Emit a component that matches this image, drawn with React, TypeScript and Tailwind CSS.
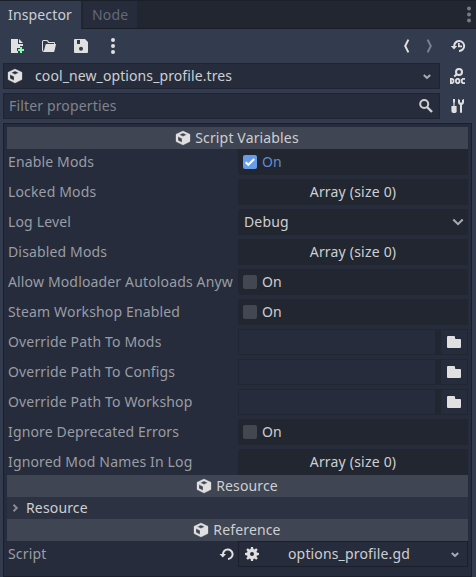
import type { ReactNode } from 'react';

type IconProps = { children: ReactNode; className?: string };

function Icon({ children, className = '' }: IconProps) {
  return (
    <svg width="16" height="16" viewBox="0 0 16 16" fill="#e0e0e0" className={`block shrink-0 ${className}`}>
      {children}
    </svg>
  );
}

function CubeIcon() {
  return (
    <Icon>
      <path
        fillRule="evenodd"
        d="M8 1 15 4.3V11.6L8 15 1 11.6V4.3ZM8 3 4.4 4.7 8 6.4 11.6 4.7ZM3 6.5V10.4L7 12.4V8.5Z"
        stroke="#e0e0e0"
        strokeWidth=".3"
        strokeLinejoin="round"
      />
    </Icon>
  );
}

function SmallArrow() {
  return (
    <Icon>
      <path d="M4.8 7 8 10 11.2 7" fill="none" stroke="#a9acb3" strokeWidth="2" />
    </Icon>
  );
}

function FolderIcon() {
  return (
    <Icon>
      <path d="M2 2a1 1 0 0 0-1 1v10a1 1 0 0 0 1 1h12a1 1 0 0 0 1-1V6a1 1 0 0 0-1-1h-4a1 1 0 0 1-1-1V3a1 1 0 0 0-1-1Z" />
    </Icon>
  );
}

function Row({ label, children }: { label: string; children: ReactNode }) {
  return (
    <div className="mb-1 flex h-[26px] last:mb-0">
      <div className="w-[231px] shrink-0 overflow-hidden pl-px pr-[5px] leading-[25px] text-[#9a9da5]">
        <div className="overflow-hidden whitespace-nowrap">{label}</div>
      </div>
      {children}
    </div>
  );
}

function Toggle({ on = false }: { on?: boolean }) {
  return (
    <div className="flex flex-1 items-center bg-[#222630] pl-[5px]">
      <div className={`h-[14px] w-[14px] rounded-[2px] ${on ? 'bg-[#699ce8]' : 'bg-[#43474f]'}`}>
        {on && (
          <svg width="14" height="14" viewBox="0 0 14 14" className="block">
            <path d="M2.7 7.2 5.3 9.8 11.2 4" fill="none" stroke="#fff" strokeWidth="2" />
          </svg>
        )}
      </div>
      <span className={`ml-[5px] leading-[24px] ${on ? 'text-[#5f8cd0]' : ''}`}>On</span>
    </div>
  );
}

function ArrayValue() {
  return <div className="flex-1 bg-[#222630] text-center leading-[25px] tracking-[0.2px]">Array (size 0)</div>;
}

function PathValue() {
  return (
    <div className="flex flex-1 bg-[#222630] p-px">
      <div className="w-[196px] bg-[#262c3b]" />
      <div className="ml-[6px] flex flex-1 items-center justify-center bg-[#262c3b]">
        <FolderIcon />
      </div>
    </div>
  );
}

function Category({ title }: { title: string }) {
  return (
    <div className="flex h-[22px] items-center justify-center gap-1 bg-[#404553] pr-px leading-[22px]">
      <CubeIcon />
      {title}
    </div>
  );
}

export default function App() {
  return (
    <div className="flex h-[577px] w-[476px] flex-col overflow-hidden bg-[#333b4f] font-['Noto_Sans',sans-serif] text-[14px] tracking-[0.15px] text-[#cdcfd2]">
      <div className="flex h-[29px] border-t border-[#1b1f29] bg-[#222630] leading-[27px]">
        <div className="w-[81px] bg-[#333b4f] pl-2">Inspector</div>
        <div className="flex flex-1 border-b border-[#191d26] pl-[2px]">
          <div className="w-[54px] bg-[#262c3b] pl-[9px] text-[#656974]">Node</div>
          <div className="flex flex-1 items-center justify-end">
            <svg width="16" height="18" viewBox="0 0 16 18" fill="#777b84" className="block">
              <circle cx="9" cy="2.5" r="2" />
              <circle cx="9" cy="8.5" r="2" />
              <circle cx="9" cy="14.5" r="2" />
            </svg>
          </div>
        </div>
      </div>

      <div className="flex h-[34px] items-center pl-[9px] pr-[10px]">
        <Icon>
          <path d="M2 1v14h7v-2H8v-3h3V8h3V6H9V1Zm8 0v4h4Z" />
          <path d="M11 9h2v2h2v2h-2v2h-2v-2H9v-2h2Z" fill="#84ffb1" />
        </Icon>
        <Icon className="ml-4">
          <path
            fillRule="evenodd"
            d="M2.5 2A1.5 1.5 0 0 0 1 3.5V12a2 2 0 0 0 2 2h9.5a1 1 0 0 0 .9-.7L15 6.6A.5.5 0 0 0 14.5 6H14V5a1 1 0 0 0-1-1H8L7 2.6A1.3 1.3 0 0 0 6 2ZM2.6 3H5.7L7.3 5H13V6H5.5a1 1 0 0 0-1 .7L3 12.4a.5.5 0 0 1-1-.2V3.6a.6.6 0 0 1 .6-.6Z"
          />
        </Icon>
        <Icon className="ml-4">
          <path
            fillRule="evenodd"
            d="M2 1a1 1 0 0 0-1 1v12a1 1 0 0 0 1 1h12a1 1 0 0 0 1-1V4l-3-3ZM4 2h5v4H4Zm4 6.8a2 2 0 1 1 0 4 2 2 0 0 1 0-4Z"
          />
          <path d="M7 2h2v4H7Z" />
        </Icon>
        <Icon className="ml-4">
          <circle cx="8" cy="2" r="2" />
          <circle cx="8" cy="8" r="2" />
          <circle cx="8" cy="14" r="2" />
        </Icon>
        <div className="flex-1" />
        <Icon className="mr-2">
          <path d="M11.4 1.6 8.2 8 11.4 14.4" fill="none" stroke="#e0e0e0" strokeWidth="2" />
        </Icon>
        <Icon className="mr-[13px]">
          <path d="M6.6 1.6 9.8 8 6.6 14.4" fill="none" stroke="#7d818b" strokeWidth="2" />
        </Icon>
        <Icon>
          <path d="M4.2 8.5A5 5 0 1 1 9 13" fill="none" stroke="#e0e0e0" strokeWidth="2" />
          <path d="M.8 8h6.4L4 11.5ZM8 5h1.7v2.6H12v1.6H8Z" />
        </Icon>
      </div>

      <div className="flex h-[26px] pl-[3px] pr-[10px]">
        <div className="flex w-[437px] items-center border border-[#202430] bg-[#262c3b] pl-[3px] pr-[4px]">
          <CubeIcon />
          <span className="ml-3 flex-1 leading-[24px] tracking-[0.1px]">cool_new_options_profile.tres</span>
          <SmallArrow />
        </div>
        <div className="ml-[9px] flex items-center">
          <Icon>
            <circle cx="10" cy="4" r="3" fill="none" stroke="#e0e0e0" strokeWidth="2" />
            <path d="M7.8 6.2 5.2 8.6" stroke="#e0e0e0" strokeWidth="2" />
            <path
              d="M1.9 10.9v4.2h1a1.6 1.6 0 0 0 1.6-1.6v-1a1.6 1.6 0 0 0-1.6-1.6ZM8 10.9h1.4l1 1v2.2l-1 1H8l-1-1v-2.2ZM16 10.9h-2.2l-1 1v2.2l1 1H16"
              fill="none"
              stroke="#e0e0e0"
              strokeWidth="1.8"
            />
          </Icon>
        </div>
      </div>

      <div className="mt-1 flex h-[26px] pl-[3px] pr-[10px]">
        <div className="flex w-[437px] items-center border border-[#202430] bg-[#262c3b] pl-[5px] pr-[5px]">
          <span className="flex-1 leading-[24px] text-[#80848d]">Filter properties</span>
          <Icon>
            <circle cx="6.2" cy="6" r="4" fill="none" stroke="#cdcfd2" strokeWidth="2" />
            <path d="M9 9 14 14" stroke="#cdcfd2" strokeWidth="2.4" />
          </Icon>
        </div>
        <div className="ml-[9px] flex items-center">
          <Icon>
            <path d="M4 1h2v3l-.4 1v3H7.6v4.2A2 2 0 0 1 6 15H4a2 2 0 0 1-1.6-2.2V8h2V5L4 4Z" />
            <path d="M9 1v3.2A3 3 0 0 0 11 7v7a1 1 0 0 0 2 0V7a3 3 0 0 0 2-2.8V1l-2 1v2.5h-2V2Z" />
          </Icon>
        </div>
      </div>

      <div className="ml-[3px] mt-1 h-[454px] w-[469px] border border-[#1b1f29] bg-[#262c3b] px-[3px] pt-[3px]">
        <Category title="Script Variables" />
        <div>
          <Row label="Enable Mods"><Toggle on /></Row>
          <Row label="Locked Mods"><ArrayValue /></Row>
          <Row label="Log Level">
            <div className="flex flex-1 items-center bg-[#222630] pl-[6px] pr-[2px]">
              <span className="flex-1 leading-[24px]">Debug</span>
              <Icon>
                <path d="M3.3 5.5 8 10.2 12.7 5.5" fill="none" stroke="#a9acb3" strokeWidth="2" />
              </Icon>
            </div>
          </Row>
          <Row label="Disabled Mods"><ArrayValue /></Row>
          <Row label="Allow Modloader Autoloads Anyw"><Toggle /></Row>
          <Row label="Steam Workshop Enabled"><Toggle /></Row>
          <Row label="Override Path To Mods"><PathValue /></Row>
          <Row label="Override Path To Configs"><PathValue /></Row>
          <Row label="Override Path To Workshop"><PathValue /></Row>
          <Row label="Ignore Deprecated Errors"><Toggle /></Row>
          <Row label="Ignored Mod Names In Log"><ArrayValue /></Row>
        </div>
        <Category title="Resource" />
        <div className="flex h-[22px] items-center bg-[#2c3241] leading-[22px]">
          <Icon>
            <path d="M6.5 4.7 9.8 8 6.5 11.3" fill="none" stroke="#888c95" strokeWidth="2" />
          </Icon>
          <span className="ml-[3px]">Resource</span>
        </div>
        <Category title="Reference" />
        <div className="flex h-[26px] items-center">
          <span className="w-[212px] pl-px leading-[24px] text-[#9a9da5]">Script</span>
          <Icon>
            <path d="M4 8.5A4.8 4.8 0 1 1 9 13" fill="none" stroke="#e0e0e0" strokeWidth="2" />
            <path d="M.5 8h6.6L3.8 11.6Z" />
          </Icon>
          <div className="ml-[3px] flex h-[26px] flex-1 items-center border border-[#1b1f29] bg-[#262c3b] pl-[5px] pr-[4px]">
            <Icon>
              <path
                fillRule="evenodd"
                d="M7 1h2l.4 2.1 1 .4 1.8-1.2 1.5 1.5-1.2 1.8.4 1L15 7v2l-2.1.4-.4 1 1.2 1.8-1.5 1.5-1.8-1.2-1 .4L9 15H7l-.4-2.1-1-.4-1.8 1.2-1.5-1.5 1.2-1.8-.4-1L1 9V7l2.1-.4.4-1-1.2-1.8 1.5-1.5 1.8 1.2 1-.4ZM8 6a2 2 0 1 0 0 4 2 2 0 0 0 0-4Z"
              />
            </Icon>
            <span className="flex-1 pr-[9px] text-center leading-[24px]">options_profile.gd</span>
            <SmallArrow />
          </div>
        </div>
      </div>
    </div>
  );
}
